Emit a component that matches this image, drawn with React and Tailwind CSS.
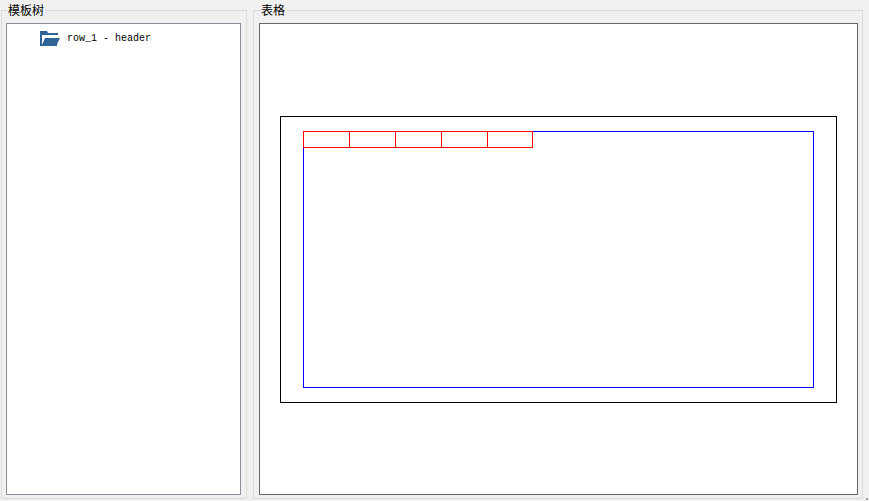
const tabs = [0, 1, 2, 3, 4]

function GroupBox({ title, className, panelClassName, children }) {
  return (
    <fieldset className={`flex flex-col min-w-0 border border-[#dcdcdc] pb-[3px] ${className}`}>
      <legend className="ml-[2px] h-[20px] pr-px text-[12px] leading-[20px] text-black">{title}</legend>
      <div className={`h-[472px] mt-[3px] bg-white border ${panelClassName}`}>{children}</div>
    </fieldset>
  )
}

function FolderIcon() {
  return (
    <svg width="20" height="15" viewBox="0 0 20 15" className="shrink-0">
      <path d="M0 0H7L8 2H18V4H2V13H0Z" fill="#2f6496" />
      <path d="M2 4H18V6H6L3 13H2Z" fill="#ffffff" />
      <path d="M5 7H20L17 13V15H0V13H2.5Z" fill="#2f6496" />
    </svg>
  )
}

export default function App() {
  return (
    <div className="w-[869px] h-[501px] overflow-hidden bg-[#f0f0f0] flex items-start pl-px gap-[6px] relative font-['Noto_Sans_CJK_SC',sans-serif]">
      <GroupBox title="模板树" className="w-[246px] pl-[4px] pr-[5px]" panelClassName="w-[235px] border-[#8a8f9c]">
        <div className="flex items-center gap-[7px] pl-[33px] pt-[7px]">
          <FolderIcon />
          <span className="text-[10px] leading-[14px] text-black font-['Liberation_Mono',monospace] whitespace-pre">row_1 - header</span>
        </div>
      </GroupBox>

      <GroupBox title="表格" className="w-[610px] px-[5px]" panelClassName="w-[599px] border-[#666666] flex items-start pl-[20px] pt-[92px]">
        <div className="w-[557px] h-[287px] border border-black pl-[22px] pt-[14px]">
          <div className="w-[511px] h-[257px] border border-[#0000ff]">
            <div className="flex -mt-px -ml-px">
              {tabs.map((t) => (
                <div key={t} className="w-[47px] last:w-[46px] h-[17px] -mr-px border border-[#ff0000]" />
              ))}
            </div>
          </div>
        </div>
      </GroupBox>

      <div className="absolute right-px bottom-px w-[2px] h-[2px] bg-[#a0a0a0]" />
    </div>
  )
}
